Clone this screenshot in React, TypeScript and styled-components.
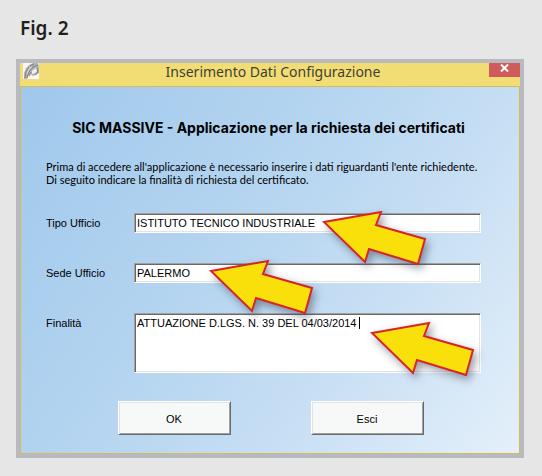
import React from "react";
import styled, { createGlobalStyle } from "styled-components";

const GlobalStyle = createGlobalStyle`
  * { box-sizing: border-box; }
  body {
    margin: 0;
    min-height: 100vh;
    background: #e6e6e6;
    color: #000;
    font-family: "Liberation Sans", sans-serif;
    font-size: 11px;
    line-height: 13px;
  }
`;

const Figure = styled.figure`
  display: flex;
  flex-direction: column;
  gap: 17px;
  margin: 0;
  padding: 14px 18px 18px 16px;
`;

const Caption = styled.figcaption`
  padding-left: 4px;
  color: #231f20;
  font: 600 19px/28px "Noto Sans", sans-serif;
`;

const Dialog = styled.section`
  border: 4px solid #b9babf;
`;

const TitleBar = styled.header`
  display: grid;
  grid-template-columns: 34px 1fr 31px;
  align-items: start;
  height: 24px;
  padding-left: 3px;
  background: #f2dd74;
  border-bottom: 1px solid #d0bd62;
`;

const Title = styled.h1`
  margin: 0;
  color: #3f4038;
  font: 400 14px/18px "Noto Sans", sans-serif;
  text-align: center;
`;

const CloseButton = styled.button`
  display: flex;
  justify-content: center;
  height: 14px;
  padding: 1px 0 0;
  border: 0;
  background: #cf5b5c;
`;

const Content = styled.form`
  display: flex;
  flex-direction: column;
  padding: 32px 38px 18px 25px;
  border: 1px solid #d3bd58;
  border-top: 0;
  background: linear-gradient(125deg, #a0c8ec 0%, #b5d5f0 42%, #c8dff4 68%, #e4f0fa 100%);
`;

const Heading = styled.h2`
  margin: 0 0 23px;
  padding-left: 10px;
  font: 700 14px/18px Inter, sans-serif;
  text-align: center;
`;

const Intro = styled.p`
  margin: 0 0 27px;
  font-family: Lato, sans-serif;
`;

const Fields = styled.div`
  display: flex;
  flex-direction: column;
  gap: 30px;
`;

const Field = styled.div`
  display: grid;
  grid-template-columns: 88px 1fr;
`;

const Label = styled.label`
  padding-top: 4px;
`;

const Control = styled.div`
  position: relative;
  display: flex;
`;

const sunken = `
  width: 100%;
  margin: 0;
  padding: 1px 2px 2px;
  border: 1px solid;
  border-color: #a0a0a0 #fff #fff #a0a0a0;
  border-radius: 0;
  outline: 0;
  background: #fff;
  box-shadow: inset 1px 1px #696969, inset -1px -1px #e3e3e3;
  color: #000;
  font: inherit;
`;

const TextInput = styled.input`
  ${sunken}
  height: 20px;
`;

const TextArea = styled.textarea`
  ${sunken}
  display: block;
  height: 60px;
  padding-top: 3px;
  resize: none;
`;

const Pointer = styled.svg<{ $left: number; $top: number }>`
  position: absolute;
  z-index: 1;
  left: ${(p) => p.$left}px;
  top: ${(p) => p.$top}px;
  width: 106px;
  height: 56px;
  overflow: visible;
  pointer-events: none;
  filter: drop-shadow(3px 4px 4px rgba(50, 60, 75, 0.5));
`;

const Caret = styled.span`
  position: absolute;
  left: 225px;
  top: 4px;
  width: 1px;
  height: 12px;
  background: #000;
`;

const Actions = styled.div`
  display: flex;
  justify-content: center;
  gap: 80px;
  margin-top: 28px;
  padding-left: 14px;
`;

const Button = styled.button`
  width: 113px;
  height: 34px;
  padding: 2px 0 0;
  border: 1px solid;
  border-color: #fff #696969 #696969 #fff;
  background: #f7f9f9;
  box-shadow: inset 1px 1px #e3e3e3, inset -1px -1px #a0a0a0;
  color: #000;
  font: inherit;
`;

const Arrow = ({ left, top }: { left: number; top: number }) => (
  <Pointer $left={left} $top={top} viewBox="0 0 106 56" aria-hidden="true">
    <path
      d="M2 12 L59 2 L54 15 L103 29 L96 54 L47 39 L43 52 Z"
      fill="#fae00a"
      stroke="#d9232a"
      strokeWidth="2"
    />
  </Pointer>
);

const AppIcon = () => (
  <svg width="16" height="16" viewBox="0 0 16 16" aria-hidden="true">
    <path fill="#f7f7f7" d="M0 0h16v16H0z" />
    <path fill="#b4b4b4" d="M1 16V10l2-5 3-3 4-2h5l1 4v6l-3 2-3 1-3-2-2 2-1 3z" />
    <path fill="none" stroke="#7d7d7d" d="M2 15l1-6 3-5M4 15l2-6 4-5 5-2M7 3l4-2M6 13l2-4M14 5l1 4-3 3" />
    <path fill="#f1f1f1" d="M9 8l4-3 1 3-2 2-3 1z" />
    <path fill="none" stroke="#dedede" d="M4 11l2-5 3-2M7 14l1-3" />
  </svg>
);

export default function App() {
  return (
    <>
      <GlobalStyle />
      <Figure>
        <Caption>Fig. 2</Caption>
        <Dialog aria-labelledby="dialog-title">
          <TitleBar>
            <AppIcon />
            <Title id="dialog-title">Inserimento Dati Configurazione</Title>
            <CloseButton type="button" aria-label="Chiudi">
              <svg width="9" height="8" viewBox="0 0 9 8" aria-hidden="true">
                <path d="M1 0.5l7 7M8 0.5l-7 7" stroke="#fff" strokeWidth="2" />
              </svg>
            </CloseButton>
          </TitleBar>
          <Content onSubmit={(e) => e.preventDefault()}>
            <Heading>SIC MASSIVE - Applicazione per la richiesta dei certificati</Heading>
            <Intro>
              Prima di accedere all'applicazione è necessario inserire i dati riguardanti l'ente richiedente.
              <br />
              Di seguito indicare la finalità di richiesta del certificato.
            </Intro>
            <Fields>
              <Field>
                <Label htmlFor="tipo">Tipo Ufficio</Label>
                <Control>
                  <TextInput id="tipo" defaultValue="ISTITUTO TECNICO INDUSTRIALE" />
                  <Arrow left={188} top={-3} />
                </Control>
              </Field>
              <Field>
                <Label htmlFor="sede">Sede Ufficio</Label>
                <Control>
                  <TextInput id="sede" defaultValue="PALERMO" />
                  <Arrow left={75} top={-4} />
                </Control>
              </Field>
              <Field>
                <Label htmlFor="finalita">Finalità</Label>
                <Control>
                  <TextArea id="finalita" defaultValue="ATTUAZIONE D.LGS. N. 39 DEL 04/03/2014" />
                  <Caret />
                  <Arrow left={236} top={8} />
                </Control>
              </Field>
            </Fields>
            <Actions>
              <Button type="submit">OK</Button>
              <Button type="button">Esci</Button>
            </Actions>
          </Content>
        </Dialog>
      </Figure>
    </>
  );
}
